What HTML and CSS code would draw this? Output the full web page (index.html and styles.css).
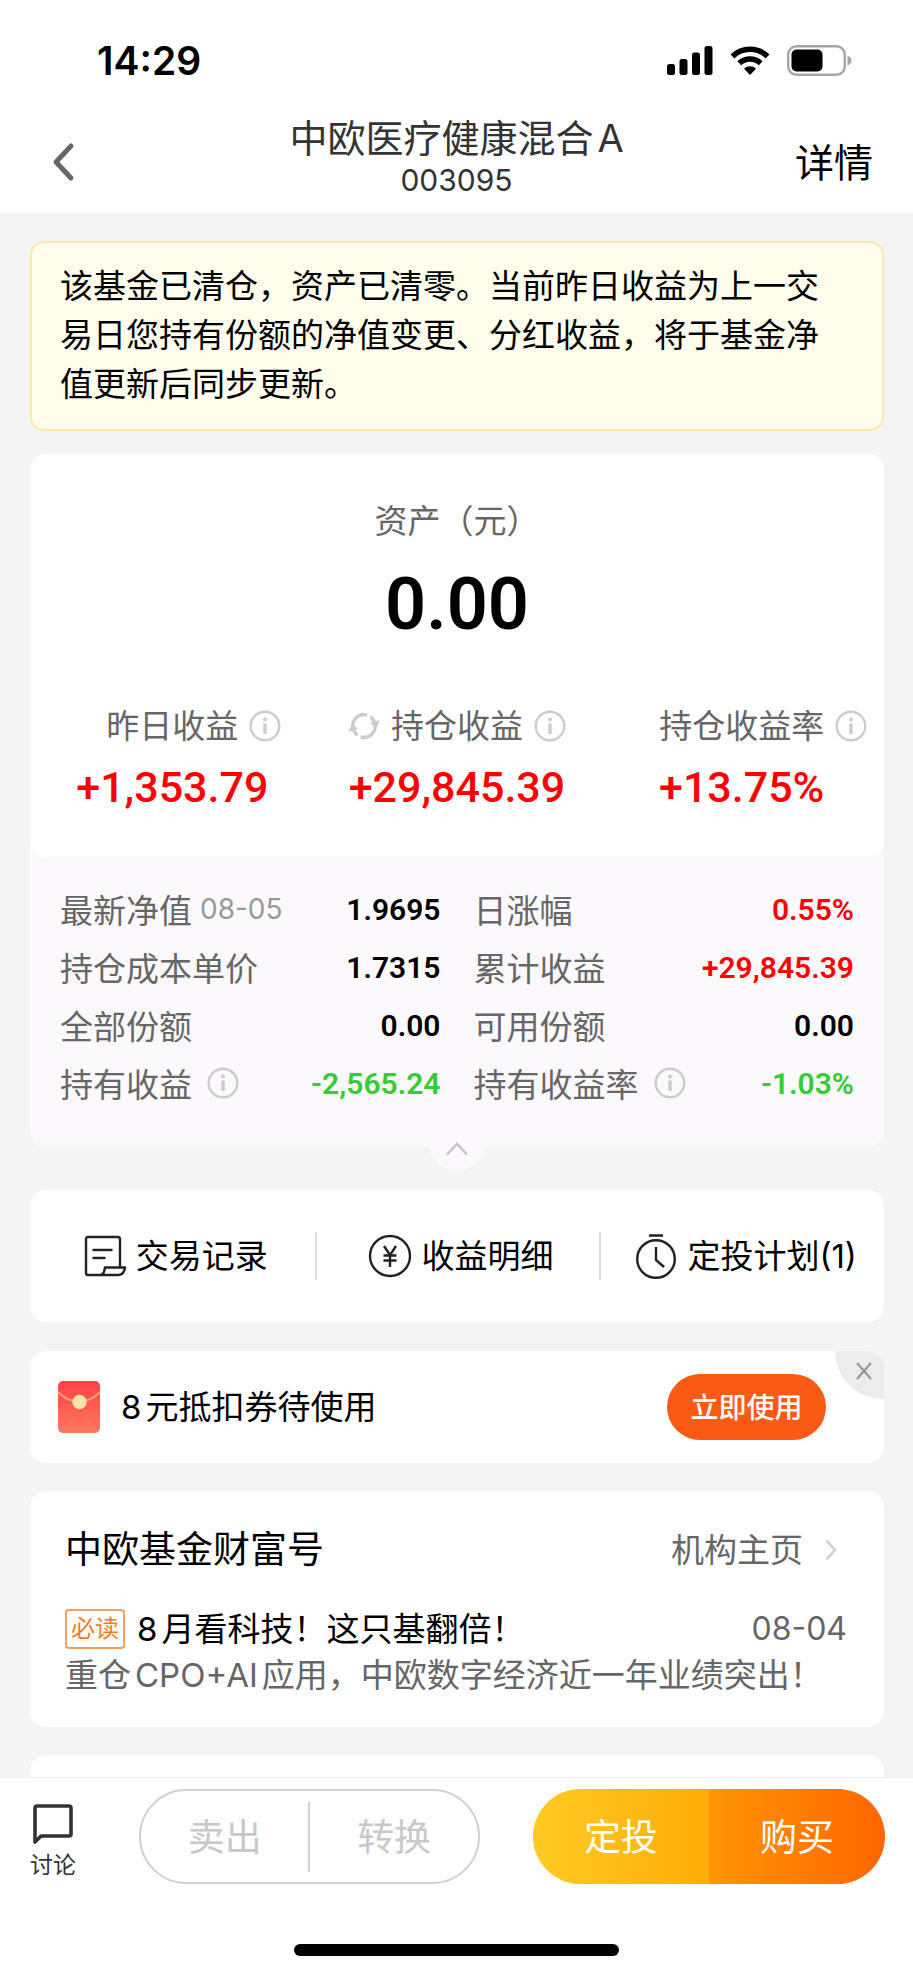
FILE: index.html
```html
<!DOCTYPE html>
<html lang="zh-CN">
<head>
    <meta charset="UTF-8">
    <meta name="viewport" content="width=device-width, initial-scale=1.0">
    <title>中欧医疗健康混合A</title>
    <link rel="stylesheet" href="styles.css">
</head>
<body>

    <!-- icono de información reutilizable -->
    <svg class="sprite" width="0" height="0">
        <symbol id="info" viewBox="0 0 32 32">
            <circle cx="16" cy="16" r="14.300" fill="none" stroke="#ccc" stroke-width="2.400"/>
            <circle cx="16" cy="9.500" r="2" fill="#ccc"/>
            <path d="M16 13.500v10.500" stroke="#ccc" stroke-width="3.400"/>
        </symbol>
    </svg>

    <div class="status-bar">
        <span class="time">14:29</span>
        <div class="status-icons">
            <svg width="46" height="29" viewBox="0 0 46 29">
                <rect x="0" y="18" width="8" height="11" rx="2.500"/>
                <rect x="12.500" y="13" width="8" height="16" rx="2.500"/>
                <rect x="25" y="6.500" width="8" height="22.500" rx="2.500"/>
                <rect x="37.500" y="0" width="8" height="29" rx="2.500"/>
            </svg>
            <svg width="40" height="29" viewBox="0 0 40 29">
                <g fill="none" stroke="#000" stroke-width="5.500">
                    <path d="M2.500 10.500a25 25 0 0 1 35 0"/>
                    <path d="M9.300 17.300a15.500 15.500 0 0 1 21.400 0"/>
                </g>
                <path d="M20 29l-6-6.300a8.600 8.600 0 0 1 12 0z"/>
            </svg>
            <svg width="65" height="31" viewBox="0 0 65 31">
                <rect x="1.200" y="1.200" width="56.600" height="28.600" rx="8.500" fill="none" stroke="#a6a6a6" stroke-width="2.400"/>
                <rect x="4.500" y="4.500" width="31" height="22" rx="5"/>
                <path d="M60.500 10.500q4 1.500 4 5t-4 5z" fill="#a6a6a6"/>
            </svg>
        </div>
    </div>

    <header class="nav">
        <button class="back" aria-label="返回">
            <svg width="24" height="40" viewBox="0 0 24 40"><path d="M20 4L5 20l15 16" fill="none" stroke="#666" stroke-width="5" stroke-linecap="round" stroke-linejoin="round"/></svg>
        </button>
        <div class="fund">
            <h1>中欧医疗健康混合<span class="latin">A</span></h1>
            <p>003095</p>
        </div>
        <a class="detail" href="#">详情</a>
    </header>

    <main class="content">
        <p class="notice">该基金已清仓，资产已清零。当前昨日收益为上一交易日您持有份额的净值变更、分红收益，将于基金净值更新后同步更新。</p>

        <section class="asset">
            <div class="summary">
                <p class="asset-label">资产（元）</p>
                <p class="asset-value">0.00</p>
                <div class="profits">
                    <div class="profit">
                        <div class="profit-label">
                            <span></span>
                            <span>昨日收益</span>
                            <svg class="info"><use href="#info"/></svg>
                        </div>
                        <strong class="red">+1,353.79</strong>
                    </div>
                    <div class="profit">
                        <div class="profit-label">
                            <svg class="refresh" viewBox="0 0 32 32">
                                <g fill="none" stroke="#ccc" stroke-width="3.400">
                                    <path d="M5.200 19a11.300 11.300 0 0 1 14-14"/>
                                    <path d="M22.500 6.800a11.300 11.300 0 0 1 4 5"/>
                                    <path d="M26.800 13a11.300 11.300 0 0 1-14 14"/>
                                    <path d="M9.500 25.200a11.300 11.300 0 0 1-4-5"/>
                                </g>
                                <path d="M22 13l10-3-4 8zM10 19l-10 3 4-8z" fill="#ccc"/>
                            </svg>
                            <span>持仓收益</span>
                            <svg class="info"><use href="#info"/></svg>
                        </div>
                        <strong class="red">+29,845.39</strong>
                    </div>
                    <div class="profit">
                        <div class="profit-label">
                            <span></span>
                            <span>持仓收益率</span>
                            <svg class="info"><use href="#info"/></svg>
                        </div>
                        <strong class="red">+13.75%</strong>
                    </div>
                </div>
            </div>

            <dl class="details">
                <div><dt>最新净值<small>08-05</small></dt><dd>1.9695</dd></div>
                <div><dt>日涨幅</dt><dd class="red">0.55%</dd></div>
                <div><dt>持仓成本单价</dt><dd>1.7315</dd></div>
                <div><dt>累计收益</dt><dd class="red">+29,845.39</dd></div>
                <div><dt>全部份额</dt><dd>0.00</dd></div>
                <div><dt>可用份额</dt><dd>0.00</dd></div>
                <div><dt>持有收益<svg class="info"><use href="#info"/></svg></dt><dd class="green">-2,565.24</dd></div>
                <div><dt>持有收益率<svg class="info"><use href="#info"/></svg></dt><dd class="green">-1.03%</dd></div>
            </dl>

            <button class="fold" aria-label="收起">
                <svg width="24" height="14" viewBox="0 0 24 14"><path d="M2 12.500L12 2l10 10.500" fill="none" stroke="#c4c4c4" stroke-width="2.400"/></svg>
            </button>
        </section>

        <nav class="actions">
            <a href="#">
                <svg width="44" height="44" viewBox="0 0 44 44" fill="none" stroke="#222" stroke-width="2.400" stroke-linejoin="round" stroke-linecap="round">
                    <path d="M37 33V5q0-2-2-2H5Q3 3 3 5v34q0 2 2 2h30q6 0 7-7.500H22q-1 7.500-5 7.500"/>
                    <path d="M10.500 16h18M10.500 24h11"/>
                </svg>
                <span>交易记录</span>
            </a>
            <a href="#">
                <svg width="44" height="44" viewBox="0 0 44 44" fill="none" stroke="#222" stroke-width="2.400">
                    <circle cx="22" cy="22" r="20"/>
                    <path d="M16 12l6 9 6-9M22 21v12M15.500 21.500h13M15.500 26.500h13"/>
                </svg>
                <span>收益明细</span>
            </a>
            <a href="#">
                <svg width="44" height="46" viewBox="0 0 44 46" fill="none" stroke="#222" stroke-width="2.400">
                    <circle cx="22" cy="26" r="18.800"/>
                    <path d="M15 2.500h14M22 14v13l8 7"/>
                </svg>
                <span>定投计划(1)</span>
            </a>
        </nav>

        <section class="coupon">
            <svg width="42" height="52" viewBox="0 0 42 52">
                <defs>
                    <linearGradient id="envelope" x2="0" y2="1">
                        <stop offset="0" stop-color="#ff4048"/>
                        <stop offset="1" stop-color="#ff7a5c"/>
                    </linearGradient>
                </defs>
                <rect width="42" height="52" rx="5" fill="url(#envelope)"/>
                <path d="M0 11q9 9.500 21 9.500T42 11" fill="none" stroke="#ffa070" stroke-width="2"/>
                <circle cx="21.500" cy="21" r="7.200" fill="#ffe3a8"/>
            </svg>
            <p><span class="number">8</span>元抵扣券待使用</p>
            <button class="use-btn">立即使用</button>
            <button class="close" aria-label="关闭">
                <svg width="18" height="18" viewBox="0 0 18 18"><path d="M2 1l14 16M16 1L2 17" stroke="#999" stroke-width="2.200"/></svg>
            </button>
        </section>

        <section class="wealth">
            <div class="wealth-head">
                <h2>中欧基金财富号</h2>
                <a href="#">机构主页
                    <svg width="12" height="22" viewBox="0 0 12 22"><path d="M1.500 1.500L10 11l-8.500 9.500" fill="none" stroke="#ccc" stroke-width="2.400"/></svg>
                </a>
            </div>
            <div class="post">
                <span class="tag">必读</span>
                <h3><span class="number">8</span>月看科技！这只基翻倍！</h3>
                <time>08-04</time>
            </div>
            <p class="post-text">重仓<span class="latin">CPO+AI</span>应用，中欧数字经济近一年业绩突出！</p>
        </section>

        <section class="next-card"></section>
    </main>

    <footer class="bottom-bar">
        <div class="buttons">
            <a class="discuss" href="#">
                <svg width="42" height="42" viewBox="0 0 42 42"><path d="M3 38V4q0-2 2-2h32q2 0 2 2v26q0 2-2 2H9z" fill="none" stroke="#333" stroke-width="3.600" stroke-linejoin="round"/></svg>
                讨论
            </a>
            <div class="group group-off">
                <button disabled>卖出</button>
                <button disabled>转换</button>
            </div>
            <div class="group">
                <button class="plan">定投</button>
                <button class="buy">购买</button>
            </div>
        </div>
        <div class="home-indicator"></div>
    </footer>

</body>
</html>
```
FILE: styles.css
```css
* {
    margin: 0;
    padding: 0;
    box-sizing: border-box;
}

body {
    font-family: Inter, "Noto Sans CJK SC", sans-serif;
    font-size: 33px;
    background-color: #f4f4f4;
    color: #000;
    min-height: 100vh;
    display: flex;
    flex-direction: column;
}

a {
    color: inherit;
    text-decoration: none;
}

button {
    font: inherit;
    border: none;
    background: none;
    cursor: pointer;
}

h1, h2, h3 {
    font-weight: 400;
}

svg {
    display: block;
    flex: none;
}

.sprite {
    position: absolute;
}

.latin {
    margin: 0 4px;
}

.number {
    margin-right: 4px;
}

.red {
    color: #fe0000;
}

.green {
    color: #33cc33;
}

/* Barra de estado */
.status-bar {
    background: #fff;
    display: flex;
    justify-content: space-between;
    align-items: center;
    padding: 37px 61px 0 97px;
    height: 84px;
}

.time {
    font-size: 39px;
    font-weight: 600;
}

.status-icons {
    display: flex;
    align-items: center;
    gap: 17px;
}

/* Cabecera */
.nav {
    background: #fff;
    display: grid;
    grid-template-columns: 1fr auto 1fr;
    align-items: center;
    height: 129px;
    padding: 30px 40px 14px;
}

.back {
    justify-self: start;
    padding: 10px 0 0 11px;
}

.fund {
    text-align: center;
    color: #333;
}

.fund h1 {
    font-size: 38px;
    line-height: 46px;
    padding-left: 4px;
}

.fund p {
    font-size: 30px;
    line-height: 38px;
}

.detail {
    justify-self: end;
    font-size: 39px;
    padding-top: 6px;
}

/* Contenido */
.content {
    flex: 1;
    display: flex;
    flex-direction: column;
    padding: 28px 29px 0 30px;
}

.notice {
    background: #fffdeb;
    border: 2px solid #fbe9a8;
    border-radius: 14px;
    padding: 19px 50px 20px 28px;
    line-height: 49px;
    margin-bottom: 23px;
}

.asset {
    background: #fbf9fb;
    border-radius: 16px;
    position: relative;
    margin-bottom: 43px;
}

.summary {
    background: #fff;
    border-radius: 16px;
    text-align: center;
    padding: 43px 0 34px;
}

.asset-label {
    color: #666;
    line-height: 48px;
}

.asset-value {
    font-family: Roboto, sans-serif;
    font-size: 72px;
    font-weight: 600;
    line-height: 120px;
    margin-bottom: 36px;
}

.profits {
    display: grid;
    grid-template-columns: repeat(3, 1fr);
}

.profit-label {
    display: grid;
    grid-template-columns: 1fr auto 1fr;
    gap: 11px;
    align-items: center;
    color: #666;
    line-height: 50px;
}

.profit strong {
    display: block;
    font-family: Roboto, sans-serif;
    font-size: 43px;
    font-weight: 500;
    line-height: 72px;
}

.info, .refresh {
    width: 32px;
    height: 32px;
}

.refresh {
    justify-self: end;
}

.details {
    display: grid;
    grid-template-columns: 1fr 1fr;
    column-gap: 33px;
    padding: 23px 30px 35px;
}

.details div {
    display: flex;
    justify-content: space-between;
    align-items: center;
    height: 58px;
}

.details dt {
    display: flex;
    align-items: center;
    color: #666;
}

.details small {
    font-size: 28px;
    color: #999;
    margin-left: 8px;
}

.details .info {
    margin-left: 15px;
}

.details dd {
    font-family: Roboto, sans-serif;
    font-size: 30px;
    font-weight: 600;
}

/* Botón de plegar, sobresale del borde de la tarjeta */
.fold {
    position: absolute;
    left: 50%;
    bottom: -24px;
    width: 56px;
    height: 56px;
    margin-left: -28px;
    padding-top: 12px;
    border-radius: 50%;
    background: #fbf9fb;
    display: flex;
    align-items: center;
    justify-content: center;
}

.actions {
    background: #fff;
    border-radius: 16px;
    display: grid;
    grid-template-columns: repeat(3, 1fr);
    align-items: center;
    height: 132px;
    margin-bottom: 29px;
}

.actions a {
    display: flex;
    align-items: center;
    justify-content: center;
    gap: 9px;
    height: 48px;
    padding-left: 6px;
    white-space: nowrap;
}

.actions span, .coupon p {
    padding-bottom: 4px;
}

.actions a + a {
    border-left: 2px solid #ddd;
}

.coupon {
    background: #fff;
    border-radius: 16px;
    position: relative;
    display: flex;
    align-items: center;
    gap: 21px;
    height: 112px;
    padding: 0 58px 0 28px;
    margin-bottom: 28px;
}

.use-btn {
    margin-left: auto;
    width: 159px;
    height: 66px;
    border-radius: 33px;
    background: #fa5a14;
    color: #fff;
    font-size: 28px;
    font-weight: 500;
    padding-bottom: 2px;
}

.close {
    position: absolute;
    top: 0;
    right: 0;
    width: 49px;
    height: 48px;
    background: #ececec;
    border-radius: 0 16px 0 48px;
    display: flex;
    align-items: center;
    justify-content: center;
    padding: 0 0 8px 8px;
}

.wealth {
    background: #fff;
    border-radius: 16px;
    padding: 30px 37px 30px 35px;
    margin-bottom: 28px;
}

.wealth-head {
    display: flex;
    justify-content: space-between;
    align-items: center;
    line-height: 58px;
    margin-bottom: 26px;
}

.wealth-head h2 {
    font-size: 37px;
}

.wealth-head a {
    display: flex;
    align-items: center;
    gap: 22px;
    color: #666;
    padding-right: 10px;
}

.post {
    display: flex;
    align-items: center;
    gap: 12px;
    line-height: 48px;
}

.tag {
    border: 2px solid #f5a05f;
    border-radius: 4px;
    color: #f37b1d;
    font-size: 24px;
    line-height: 36px;
    padding: 0 4px;
}

.post h3 {
    font-size: 33px;
}

.post time {
    margin-left: auto;
    font-size: 32px;
    color: #666;
}

.post-text {
    color: #666;
    line-height: 44px;
}

.next-card {
    flex: 1;
    min-height: 22px;
    background: #fff;
    border-radius: 16px 16px 0 0;
}

/* Barra inferior */
.bottom-bar {
    background: #fff;
    border-top: 1px solid #eee;
    padding: 11px 28px 20px;
}

.buttons {
    display: flex;
    align-items: center;
    margin-bottom: 60px;
}

.discuss {
    display: flex;
    flex-direction: column;
    align-items: center;
    gap: 2px;
    color: #333;
    font-size: 23px;
    line-height: 34px;
    padding: 12px 0 0 2px;
    margin-right: 63px;
}

.group {
    flex: 23;
    display: flex;
    height: 95px;
    border-radius: 48px;
    overflow: hidden;
}

.group button {
    flex: 1;
    font-size: 37px;
    color: #fff;
    padding-bottom: 4px;
}

.group-off {
    flex: 22;
    align-items: center;
    border: 2px solid #d0d0d0;
    margin-right: 53px;
}

.group-off button {
    height: 70px;
    color: #c8c8c8;
}

.group-off button + button {
    border-left: 2px solid #d0d0d0;
}

.group .plan {
    background: linear-gradient(to right, #ffca24, #ffac06);
}

.group .buy {
    background: linear-gradient(to right, #ff9505, #ff6600);
}

.home-indicator {
    width: 38%;
    height: 12px;
    margin: 0 auto;
    border-radius: 6px;
    background: #000;
}
```
